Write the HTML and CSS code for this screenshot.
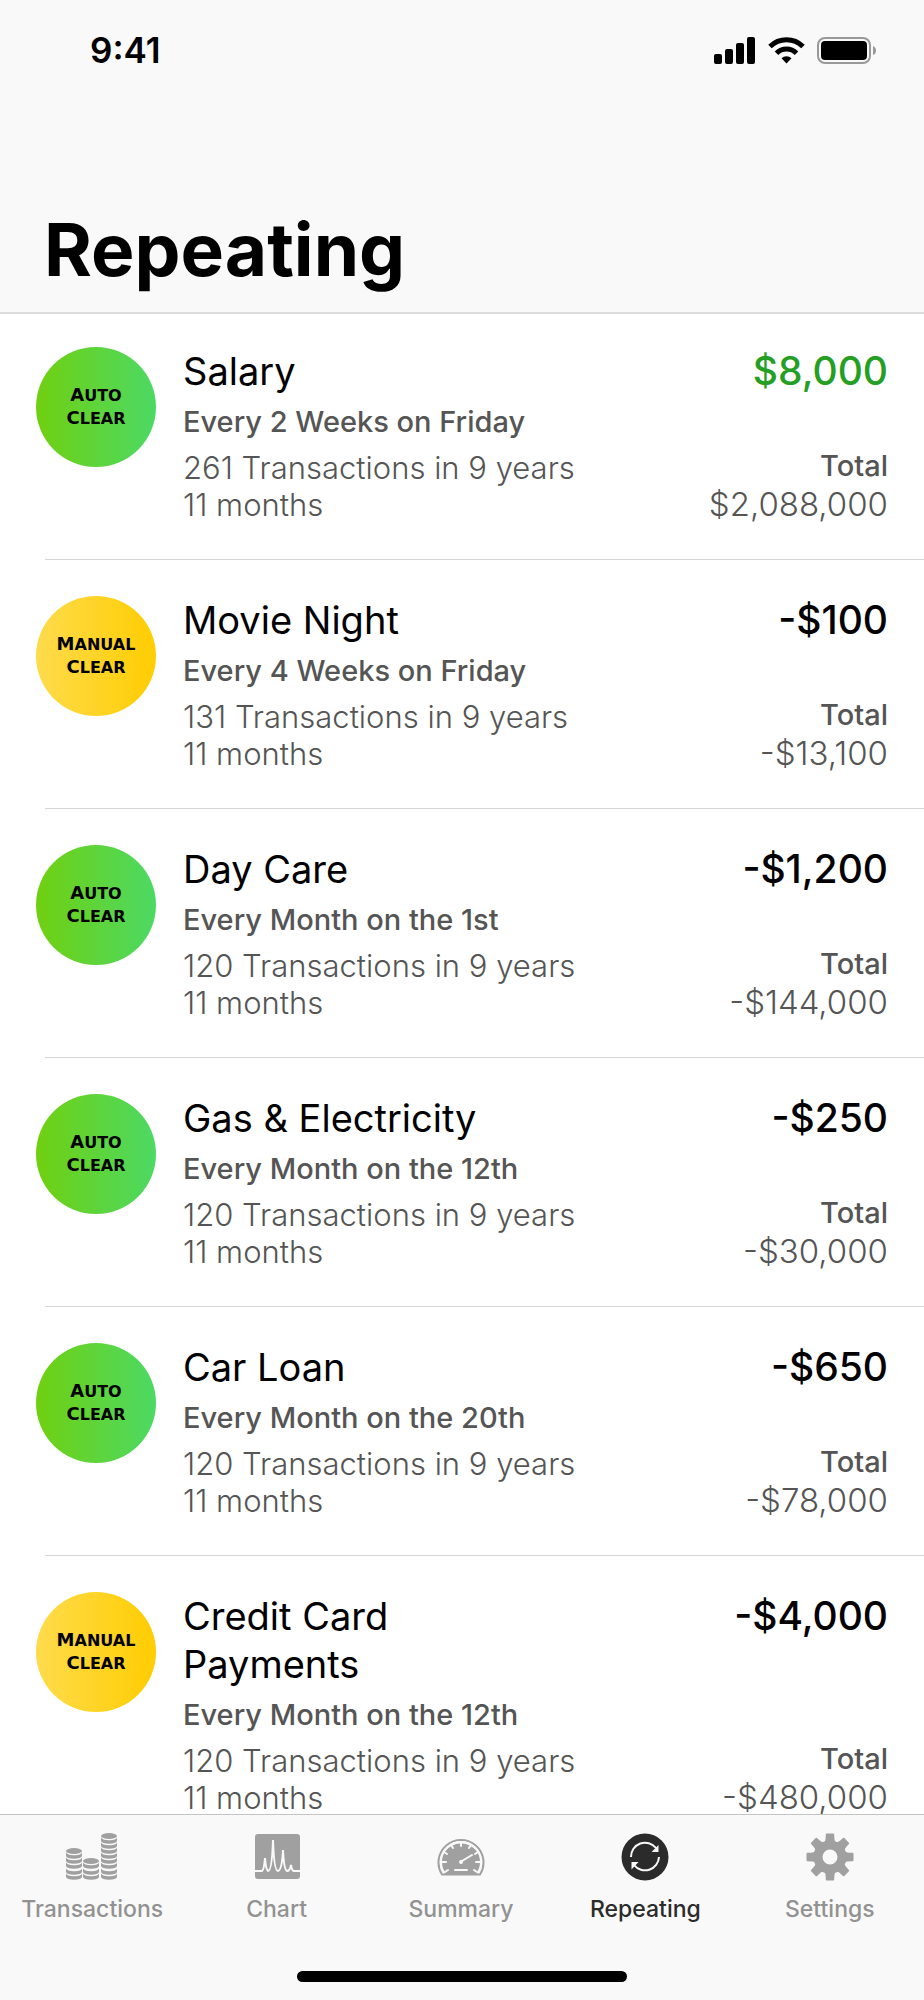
FILE: index.html
```html
<!DOCTYPE html>
<html lang="en">
<head>
    <meta charset="UTF-8">
    <meta name="viewport" content="width=device-width, initial-scale=1.0">
    <title>Repeating</title>
    <link rel="stylesheet" href="styles.css">
</head>
<body>
    <header class="header">
        <div class="status-bar">
            <span class="time">9:41</span>
            <div class="status-icons">
                <svg width="42" height="27" viewBox="0 0 42 27">
                    <rect x="0" y="17" width="8" height="10" rx="2"/>
                    <rect x="11" y="12" width="8" height="15" rx="2"/>
                    <rect x="22" y="6" width="8" height="21" rx="2"/>
                    <rect x="33" y="0" width="8" height="27" rx="2"/>
                </svg>
                <svg width="37" height="27" viewBox="0 0 37 27" fill="none" stroke="#000" stroke-width="5">
                    <path d="M2 9.500a23.500 23.500 0 0 1 33 0"/>
                    <path d="M8.500 16.200a14.300 14.300 0 0 1 20 0"/>
                    <path d="M13.500 21.300a7.200 7.200 0 0 1 10 0L18.500 26.500z" fill="#000" stroke="none"/>
                </svg>
                <svg width="60" height="27" viewBox="0 0 60 27">
                    <rect x="1" y="1" width="52" height="25" rx="7" fill="none" stroke="#999" stroke-width="2"/>
                    <rect x="4" y="4" width="46" height="19" rx="4"/>
                    <path d="M56 9q3 1 3 4.500t-3 4.500z" fill="#999"/>
                </svg>
            </div>
        </div>
        <h1>Repeating</h1>
    </header>

    <main class="content">
        <ul class="list">
            <li>
                <div class="row">
                    <div class="badge auto"><span>Auto</span><span>Clear</span></div>
                    <div class="details">
                        <h2>Salary</h2>
                        <p class="schedule">Every 2 Weeks on Friday</p>
                        <p class="count">261 Transactions in 9 years 11 months</p>
                    </div>
                    <div class="amounts">
                        <p class="amount income">$8,000</p>
                        <p class="total-label">Total</p>
                        <p class="total">$2,088,000</p>
                    </div>
                </div>
            </li>
            <li>
                <div class="row">
                    <div class="badge manual"><span>Manual</span><span>Clear</span></div>
                    <div class="details">
                        <h2>Movie Night</h2>
                        <p class="schedule">Every 4 Weeks on Friday</p>
                        <p class="count">131 Transactions in 9 years 11 months</p>
                    </div>
                    <div class="amounts">
                        <p class="amount">-$100</p>
                        <p class="total-label">Total</p>
                        <p class="total">-$13,100</p>
                    </div>
                </div>
            </li>
            <li>
                <div class="row">
                    <div class="badge auto"><span>Auto</span><span>Clear</span></div>
                    <div class="details">
                        <h2>Day Care</h2>
                        <p class="schedule">Every Month on the 1st</p>
                        <p class="count">120 Transactions in 9 years 11 months</p>
                    </div>
                    <div class="amounts">
                        <p class="amount">-$1,200</p>
                        <p class="total-label">Total</p>
                        <p class="total">-$144,000</p>
                    </div>
                </div>
            </li>
            <li>
                <div class="row">
                    <div class="badge auto"><span>Auto</span><span>Clear</span></div>
                    <div class="details">
                        <h2>Gas &amp; Electricity</h2>
                        <p class="schedule">Every Month on the 12th</p>
                        <p class="count">120 Transactions in 9 years 11 months</p>
                    </div>
                    <div class="amounts">
                        <p class="amount">-$250</p>
                        <p class="total-label">Total</p>
                        <p class="total">-$30,000</p>
                    </div>
                </div>
            </li>
            <li>
                <div class="row">
                    <div class="badge auto"><span>Auto</span><span>Clear</span></div>
                    <div class="details">
                        <h2>Car Loan</h2>
                        <p class="schedule">Every Month on the 20th</p>
                        <p class="count">120 Transactions in 9 years 11 months</p>
                    </div>
                    <div class="amounts">
                        <p class="amount">-$650</p>
                        <p class="total-label">Total</p>
                        <p class="total">-$78,000</p>
                    </div>
                </div>
            </li>
            <li>
                <div class="row">
                    <div class="badge manual"><span>Manual</span><span>Clear</span></div>
                    <div class="details">
                        <h2>Credit Card<br>Payments</h2>
                        <p class="schedule">Every Month on the 12th</p>
                        <p class="count">120 Transactions in 9 years 11 months</p>
                    </div>
                    <div class="amounts">
                        <p class="amount">-$4,000</p>
                        <p class="total-label">Total</p>
                        <p class="total">-$480,000</p>
                    </div>
                </div>
            </li>
        </ul>
    </main>

    <footer class="footer">
        <nav class="tabs">
            <a href="#transactions" class="tab">
                <svg width="52" height="48" viewBox="0 0 52 48">
                    <defs>
                        <ellipse id="coin-top" cx="8" cy="3" rx="8" ry="3"/>
                        <path id="coin" d="M0 4.500Q1 7 8 7.200T16 4.500V8Q15 10.800 8 10.800T0 8z"/>
                    </defs>
                    <!-- left stack -->
                    <use href="#coin-top" x="0" y="15"/>
                    <use href="#coin" x="0" y="15"/>
                    <use href="#coin" x="0" y="20"/>
                    <use href="#coin" x="0" y="25"/>
                    <use href="#coin" x="0" y="31"/>
                    <use href="#coin" x="0" y="36"/>
                    <!-- middle stack -->
                    <use href="#coin-top" x="17" y="25"/>
                    <use href="#coin" x="17" y="25"/>
                    <use href="#coin" x="17" y="31"/>
                    <use href="#coin" x="17" y="36"/>
                    <!-- right stack -->
                    <use href="#coin-top" x="35" y="0"/>
                    <use href="#coin" x="35" y="0"/>
                    <use href="#coin" x="35" y="5"/>
                    <use href="#coin" x="35" y="10"/>
                    <use href="#coin" x="35" y="15"/>
                    <use href="#coin" x="35" y="20"/>
                    <use href="#coin" x="35" y="25"/>
                    <use href="#coin" x="35" y="31"/>
                    <use href="#coin" x="35" y="36"/>
                </svg>
                <span>Transactions</span>
            </a>
            <a href="#chart" class="tab">
                <svg width="48" height="48" viewBox="0 0 48 48">
                    <rect x="2" y="1" width="45" height="45" rx="3"/>
                    <path d="M2 38h7q2-1 3-13 1 12 3 13 4 0 5-31 1 31 5 31 4-1 5-21 1 20 4 21 3 0 4-6 1 6 3 6h6" fill="none" stroke="#f9f9f9" stroke-width="2"/>
                </svg>
                <span>Chart</span>
            </a>
            <a href="#summary" class="tab">
                <svg width="48" height="48" viewBox="0 0 48 48">
                    <path d="M5 41.500A22.500 22.500 0 1 1 43 41.500z" fill="none" stroke="#a0a0a0" stroke-width="2"/>
                    <path d="M7 41A20 20 0 1 1 41 41z"/>
                    <g stroke="#f9f9f9" stroke-width="2" stroke-linecap="round" fill="none">
                        <path d="M7 39.500A20 20 0 1 1 41 39.500"/>
                        <path d="M24 9v4M14 12l2 3M34 12l-2 3M7 19l3 2M5 29h4M39 29h4M8 39l3-2M40 39l-3-2M38 21l3-2M18 37h12"/>
                        <path d="M25 28l10-6"/>
                        <circle cx="24" cy="29" r="1"/>
                    </g>
                </svg>
                <span>Summary</span>
            </a>
            <a href="#repeating" class="tab active">
                <svg width="48" height="48" viewBox="0 0 48 48">
                    <circle cx="24" cy="24" r="23.500"/>
                    <g fill="none" stroke="#f9f9f9" stroke-width="2">
                        <path d="M10 24A14 14 0 0 1 35 15"/>
                        <path d="M38 24A14 14 0 0 1 13 32"/>
                    </g>
                    <path d="M37.500 12v7h-7zM10.500 36.500v-7.500h7z" fill="#f9f9f9"/>
                </svg>
                <span>Repeating</span>
            </a>
            <a href="#settings" class="tab">
                <svg width="48" height="48" viewBox="0 0 48 48">
                    <defs>
                        <path id="tooth" d="M18.500 9q1.200-1 1.300-7.500 0-1 1-1h6.400q1 0 1 1 .1 6.500 1.300 7.500z"/>
                    </defs>
                    <circle cx="24" cy="24" r="12" fill="none" stroke="#a0a0a0" stroke-width="9"/>
                    <use href="#tooth"/>
                    <use href="#tooth" transform="rotate(45 24 24)"/>
                    <use href="#tooth" transform="rotate(90 24 24)"/>
                    <use href="#tooth" transform="rotate(135 24 24)"/>
                    <use href="#tooth" transform="rotate(180 24 24)"/>
                    <use href="#tooth" transform="rotate(225 24 24)"/>
                    <use href="#tooth" transform="rotate(270 24 24)"/>
                    <use href="#tooth" transform="rotate(315 24 24)"/>
                </svg>
                <span>Settings</span>
            </a>
        </nav>
        <div class="home-indicator"></div>
    </footer>
</body>
</html>
```

FILE: styles.css
```css
:root {
    --bar-bg: #f9f9f9;
    --text: #000000;
    --text-muted: #555555;
    --icon-muted: #a0a0a0;
    --label-muted: #929292;
    --active: #2b2b2b;
    --income: #249f24;
    --line: #d6d6d6;
}

* {
    margin: 0;
    padding: 0;
    box-sizing: border-box;
}

body {
    height: 100vh;
    display: flex;
    flex-direction: column;
    background: #ffffff;
    color: var(--text);
    font-family: 'Inter', sans-serif;
    overflow: hidden;
}

/* Header */
.header {
    background: var(--bar-bg);
    border-bottom: 2px solid #dcdcdc;
}

.status-bar {
    display: flex;
    align-items: center;
    justify-content: space-between;
    height: 100px;
    padding: 0 47px 0 90px;
}

.time {
    font-size: 35px;
    font-weight: 600;
}

.status-icons {
    display: flex;
    gap: 12px;
}

h1 {
    padding: 105px 44px 17px;
    font-size: 73px;
    line-height: 90px;
    font-weight: 700;
}

/* List */
.content {
    flex: 1;
    min-height: 0;
    overflow: hidden;
}

.list {
    margin-top: -3px;
    list-style: none;
}

.list li::after {
    content: '';
    display: block;
    height: 1px;
    margin-left: 45px;
    background: var(--line);
}

.row {
    display: grid;
    grid-template-columns: 120px 3fr 2fr;
    column-gap: 27px;
    padding: 36px;
}

.badge {
    display: flex;
    flex-direction: column;
    justify-content: center;
    width: 120px;
    height: 120px;
    border-radius: 50%;
    font-family: 'DejaVu Sans', sans-serif;
    font-size: 16px;
    font-weight: 700;
    line-height: 22px;
    text-align: center;
    text-transform: uppercase;
}

.badge span {
    display: block;
}

.badge span::first-letter {
    font-size: 18px;
}

.badge.auto {
    background: linear-gradient(to right, #70d010, #4cd964);
}

.badge.manual {
    background: linear-gradient(to right, #ffdb4c, #ffcd02);
}

h2 {
    font-size: 38px;
    line-height: 48px;
    font-weight: 400;
}

.schedule {
    margin: 10px 0;
    color: var(--text-muted);
    font-size: 29px;
    line-height: 34px;
    font-weight: 500;
}

.count {
    color: var(--text-muted);
    font-size: 31px;
    line-height: 37px;
    font-weight: 300;
}

.amounts {
    display: flex;
    flex-direction: column;
    text-align: right;
}

.amount {
    margin-bottom: auto;
    font-size: 39px;
    line-height: 48px;
    font-weight: 500;
}

.amount.income {
    color: var(--income);
}

.total-label {
    margin-bottom: 2px;
    color: var(--text-muted);
    font-size: 29px;
    line-height: 34px;
    font-weight: 500;
}

.total {
    color: var(--text-muted);
    font-size: 33px;
    line-height: 38px;
    font-weight: 300;
}

/* Tab bar */
.footer {
    background: var(--bar-bg);
    border-top: 1px solid #c4c4c4;
    padding-bottom: 18px;
}

.tabs {
    display: grid;
    grid-template-columns: repeat(5, 1fr);
    padding-right: 2px;
}

.tab {
    display: flex;
    flex-direction: column;
    align-items: center;
    gap: 14px;
    padding-top: 18px;
    color: var(--label-muted);
    font-size: 23px;
    line-height: 28px;
    font-weight: 500;
    text-decoration: none;
}

.tab svg {
    fill: var(--icon-muted);
}

.tab.active,
.tab.active svg {
    color: var(--active);
    fill: var(--active);
}

.home-indicator {
    width: 330px;
    height: 11px;
    margin: 48px auto 0;
    border-radius: 6px;
    background: #000000;
}
```
